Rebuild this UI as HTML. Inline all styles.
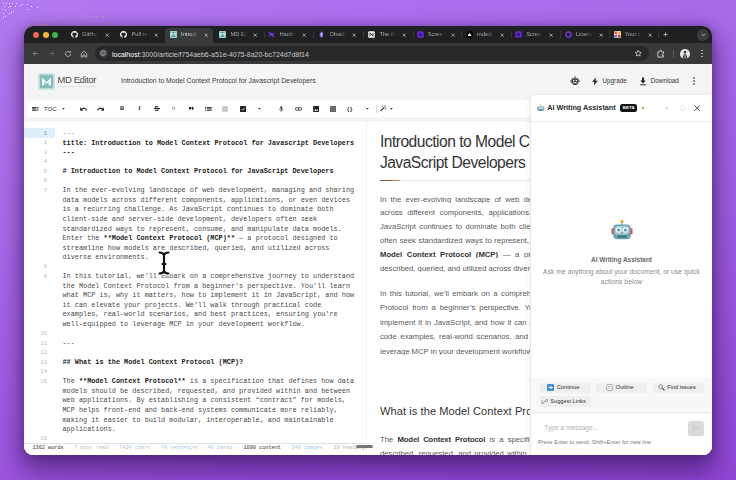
<!DOCTYPE html>
<html lang="en"><head><meta charset="utf-8"><title>MD Editor</title>
<style>
*{box-sizing:border-box;margin:0;padding:0}
html,body{width:736px;height:480px;overflow:hidden}
body{position:relative;font-family:"Liberation Sans",sans-serif;background:linear-gradient(100deg,rgba(255,255,255,.07) 0%,rgba(255,255,255,0) 45%,rgba(40,0,90,.06) 100%),linear-gradient(180deg,#ae70ef 0%,#a562e9 45%,#964adc 100%);}
.abs{position:absolute}
.t{position:absolute;white-space:nowrap;line-height:1}
#shadow{position:absolute;left:24px;top:25.5px;width:688px;height:429.5px;border-radius:9px;box-shadow:0 13px 24px 3px rgba(30,8,60,.5),0 0 10px rgba(50,20,90,.35)}
#win{position:absolute;left:24px;top:25.5px;width:688px;height:429.5px;border-radius:9px;overflow:hidden;background:#fff}
#tabs{position:absolute;left:0;top:0;width:688px;height:18px;background:#1f2022}
#tb{position:absolute;left:0;top:17.7px;width:688px;height:21.3px;background:#38393b;z-index:3}
#app{position:absolute;left:0;top:38.5px;width:688px;height:391px;background:#f5f5f5}
.mono{font-family:"Liberation Mono",monospace}
.ln{position:absolute;left:0;width:23px;text-align:right;font-size:5.6px;color:#b9bcc0;line-height:1;font-family:"Liberation Mono",monospace}
.cl{position:absolute;left:38.5px;font-size:6.85px;color:#4a4a4a;white-space:pre;line-height:1;font-family:"Liberation Mono",monospace}
.cl b{color:#222}
.pv{position:absolute;left:356px;width:322px;font-size:7.69px;color:#5a5a5a;white-space:nowrap;line-height:1;text-align:justify;text-align-last:justify;overflow:hidden}
.pv b{color:#333}
</style></head><body>

<svg class="abs" style="left:0;top:0" width="110" height="30">
<rect x="3" y="3" width="1" height="1" fill="#e6dcf7"/>
<rect x="6" y="3" width="1" height="1" fill="#e6dcf7"/>
<rect x="9" y="3" width="1" height="1" fill="#e6dcf7"/>
<rect x="12" y="3" width="1" height="1" fill="#e6dcf7"/>
<rect x="16" y="3" width="1" height="1" fill="#e6dcf7"/>
<rect x="4" y="6" width="1" height="1" fill="#e6dcf7"/>
<rect x="8" y="7" width="1" height="1" fill="#e6dcf7"/>
<rect x="10" y="6" width="1" height="1" fill="#e6dcf7"/>
<rect x="15" y="6" width="1" height="1" fill="#e6dcf7"/>
<rect x="20" y="5" width="1" height="1" fill="#e6dcf7"/>
<rect x="22" y="4" width="1" height="1" fill="#e6dcf7"/>
<rect x="27" y="4" width="1" height="1" fill="#e6dcf7"/>
<rect x="31" y="6" width="1" height="1" fill="#e6dcf7"/>
<rect x="37" y="7" width="1" height="1" fill="#e6dcf7"/>
<rect x="28" y="9" width="1" height="1" fill="#e6dcf7"/>
<rect x="2" y="9" width="1" height="1" fill="#e6dcf7"/>
<rect x="5" y="10" width="1" height="1" fill="#e6dcf7"/>
<rect x="13" y="11" width="1" height="1" fill="#e6dcf7"/>
<rect x="11" y="12" width="1" height="1" fill="#e6dcf7"/>
<rect x="9" y="13" width="1" height="1" fill="#e6dcf7"/>
<rect x="3" y="13" width="1" height="1" fill="#e6dcf7"/>
<rect x="5" y="16" width="1" height="1" fill="#e6dcf7"/>
<rect x="3" y="17" width="1" height="1" fill="#e6dcf7"/>
<rect x="87" y="17" width="1" height="1" fill="#d9a56b"/>
<rect x="91" y="16" width="1" height="1" fill="#d9a56b"/>
<rect x="97" y="16" width="1" height="1" fill="#d9a56b"/>
<rect x="103" y="16" width="1" height="1" fill="#d9a56b"/>
<rect x="36" y="19" width="1" height="1" fill="#d9a56b"/>
<rect x="42" y="20" width="1" height="1" fill="#d9a56b"/>
<rect x="48" y="20" width="1" height="1" fill="#d9a56b"/>
<rect x="22" y="21" width="1" height="1" fill="#d9a56b"/>
<rect x="28" y="24" width="1" height="1" fill="#d9a56b"/>
<rect x="33" y="22" width="1" height="1" fill="#d9a56b"/>
<rect x="36" y="24" width="1" height="1" fill="#d9a56b"/>
<rect x="38" y="24" width="1" height="1" fill="#d9a56b"/>
<rect x="40" y="24" width="1" height="1" fill="#d9a56b"/>
<rect x="42" y="24" width="1" height="1" fill="#d9a56b"/>
<rect x="44" y="24" width="1" height="1" fill="#d9a56b"/>
<rect x="46" y="24" width="1" height="1" fill="#d9a56b"/>
</svg>
<div id="shadow"></div><div id="win">
<div id="tabs">
<div class="abs" style="left:141px;top:2.2px;width:48px;height:15.8px;background:#38393b;border-radius:4px 4px 0 0"></div>
<div class="abs" style="left:9.4px;top:6.6px;width:5.8px;height:5.8px;border-radius:50%;background:#ec6a4f"></div>
<div class="abs" style="left:18.900000000000002px;top:6.6px;width:5.8px;height:5.8px;border-radius:50%;background:#f0b537"></div>
<div class="abs" style="left:28.1px;top:6.6px;width:5.8px;height:5.8px;border-radius:50%;background:#3fb34a"></div>
<svg class="abs" style="left:46.75px;top:5.9px" width="7" height="7" viewBox="0 0 16 16"><path fill="#fff" d="M8 0C3.58 0 0 3.58 0 8c0 3.54 2.29 6.53 5.47 7.59.4.07.55-.17.55-.38 0-.19-.01-.82-.01-1.49-2.01.37-2.53-.49-2.69-.94-.09-.23-.48-.94-.82-1.13-.28-.15-.68-.52-.01-.53.63-.01 1.08.58 1.23.82.72 1.21 1.87.87 2.33.66.07-.52.28-.87.51-1.07-1.78-.2-3.64-.89-3.64-3.95 0-.87.31-1.59.82-2.15-.08-.2-.36-1.02.08-2.12 0 0 .67-.21 2.2.82.64-.18 1.32-.27 2-.27s1.36.09 2 .27c1.53-1.04 2.2-.82 2.2-.82.44 1.1.16 1.92.08 2.12.51.56.82 1.27.82 2.15 0 3.07-1.87 3.75-3.65 3.95.29.25.54.73.54 1.48 0 1.07-.01 1.93-.01 2.2 0 .21.15.46.55.38A8.01 8.01 0 0 0 16 8c0-4.42-3.58-8-8-8z"/></svg>
<div class="t" style="left:58px;top:6.5px;font-size:5.7px;color:#a9aaad;width:17px;overflow:hidden;-webkit-mask-image:linear-gradient(90deg,#000 55%,transparent 100%);mask-image:linear-gradient(90deg,#000 55%,transparent 100%)">GitHu</div>
<svg class="abs" style="left:80.8px;top:7.3px" width="4.4" height="4.4" viewBox="0 0 10 10"><path d="M1.5 1.5l7 7M8.5 1.5l-7 7" stroke="#c9cacc" stroke-width="1.7"/></svg>
<svg class="abs" style="left:96.25px;top:5.9px" width="7" height="7" viewBox="0 0 16 16"><path fill="#fff" d="M8 0C3.58 0 0 3.58 0 8c0 3.54 2.29 6.53 5.47 7.59.4.07.55-.17.55-.38 0-.19-.01-.82-.01-1.49-2.01.37-2.53-.49-2.69-.94-.09-.23-.48-.94-.82-1.13-.28-.15-.68-.52-.01-.53.63-.01 1.08.58 1.23.82.72 1.21 1.87.87 2.33.66.07-.52.28-.87.51-1.07-1.78-.2-3.64-.89-3.64-3.95 0-.87.31-1.59.82-2.15-.08-.2-.36-1.02.08-2.12 0 0 .67-.21 2.2.82.64-.18 1.32-.27 2-.27s1.36.09 2 .27c1.53-1.04 2.2-.82 2.2-.82.44 1.1.16 1.92.08 2.12.51.56.82 1.27.82 2.15 0 3.07-1.87 3.75-3.65 3.95.29.25.54.73.54 1.48 0 1.07-.01 1.93-.01 2.2 0 .21.15.46.55.38A8.01 8.01 0 0 0 16 8c0-4.42-3.58-8-8-8z"/></svg>
<div class="t" style="left:107.5px;top:6.5px;font-size:5.7px;color:#a9aaad;width:17px;overflow:hidden;-webkit-mask-image:linear-gradient(90deg,#000 55%,transparent 100%);mask-image:linear-gradient(90deg,#000 55%,transparent 100%)">Pull re</div>
<svg class="abs" style="left:130.4px;top:7.3px" width="4.4" height="4.4" viewBox="0 0 10 10"><path d="M1.5 1.5l7 7M8.5 1.5l-7 7" stroke="#c9cacc" stroke-width="1.7"/></svg>
<svg class="abs" style="left:145.75px;top:5.9px" width="7" height="7" viewBox="0 0 14 14"><rect width="14" height="14" rx="2" fill="#bfe3df"/><rect x="1.5" y="1.5" width="11" height="11" rx="1" fill="#4f9a94"/><path d="M3.5 10.5V3.5L7 7l3.5-3.5v7" fill="none" stroke="#fff" stroke-width="1.8"/></svg>
<div class="t" style="left:157.1px;top:6.5px;font-size:5.7px;color:#dcdcde;width:17px;overflow:hidden;-webkit-mask-image:linear-gradient(90deg,#000 55%,transparent 100%);mask-image:linear-gradient(90deg,#000 55%,transparent 100%)">Introdu</div>
<svg class="abs" style="left:179.9px;top:7.3px" width="4.4" height="4.4" viewBox="0 0 10 10"><path d="M1.5 1.5l7 7M8.5 1.5l-7 7" stroke="#c9cacc" stroke-width="1.7"/></svg>
<svg class="abs" style="left:195.25px;top:5.9px" width="7" height="7" viewBox="0 0 14 14"><rect width="14" height="14" rx="2" fill="#bfe3df"/><rect x="1.5" y="1.5" width="11" height="11" rx="1" fill="#4f9a94"/><path d="M3.5 10.5V3.5L7 7l3.5-3.5v7" fill="none" stroke="#fff" stroke-width="1.8"/></svg>
<div class="t" style="left:206.6px;top:6.5px;font-size:5.7px;color:#a9aaad;width:17px;overflow:hidden;-webkit-mask-image:linear-gradient(90deg,#000 55%,transparent 100%);mask-image:linear-gradient(90deg,#000 55%,transparent 100%)">MD Edi</div>
<svg class="abs" style="left:229.4px;top:7.3px" width="4.4" height="4.4" viewBox="0 0 10 10"><path d="M1.5 1.5l7 7M8.5 1.5l-7 7" stroke="#c9cacc" stroke-width="1.7"/></svg>
<div class="abs" style="left:240.1px;top:5.8px;width:0.6px;height:7px;background:#37383b"></div>
<svg class="abs" style="left:244.10000000000002px;top:5.9px" width="7" height="7" viewBox="0 0 14 14"><path d="M2 3l4 2 2 4 4 2M3 9l3-4M8 9l3-4" stroke="#7c3aed" stroke-width="2.4" fill="none" stroke-linecap="round"/></svg>
<div class="t" style="left:255.4px;top:6.5px;font-size:5.7px;color:#a9aaad;width:17px;overflow:hidden;-webkit-mask-image:linear-gradient(90deg,#000 55%,transparent 100%);mask-image:linear-gradient(90deg,#000 55%,transparent 100%)">Hackh</div>
<svg class="abs" style="left:278.2px;top:7.3px" width="4.4" height="4.4" viewBox="0 0 10 10"><path d="M1.5 1.5l7 7M8.5 1.5l-7 7" stroke="#c9cacc" stroke-width="1.7"/></svg>
<div class="abs" style="left:288.9px;top:5.8px;width:0.6px;height:7px;background:#37383b"></div>
<svg class="abs" style="left:294.3px;top:5.9px" width="7" height="7" viewBox="0 0 14 14"><path d="M7 0.5l3.5 4.5-1 6.5L7 13.5 4 11 3 6z" fill="#8b6cef"/><path d="M7 2l1.8 4-1 5L6 9z" fill="#c9b8ff"/></svg>
<div class="t" style="left:305.6px;top:6.5px;font-size:5.7px;color:#a9aaad;width:17px;overflow:hidden;-webkit-mask-image:linear-gradient(90deg,#000 55%,transparent 100%);mask-image:linear-gradient(90deg,#000 55%,transparent 100%)">Obsidi</div>
<svg class="abs" style="left:328.4px;top:7.3px" width="4.4" height="4.4" viewBox="0 0 10 10"><path d="M1.5 1.5l7 7M8.5 1.5l-7 7" stroke="#c9cacc" stroke-width="1.7"/></svg>
<div class="abs" style="left:339.1px;top:5.8px;width:0.6px;height:7px;background:#37383b"></div>
<svg class="abs" style="left:344.1px;top:5.9px" width="7" height="7" viewBox="0 0 14 14"><rect x="0.5" y="0.5" width="13" height="13" rx="2" fill="#fff"/><path d="M4 10.5V3.5l6 7v-7" fill="none" stroke="#222" stroke-width="1.8"/></svg>
<div class="t" style="left:355.4px;top:6.5px;font-size:5.7px;color:#a9aaad;width:17px;overflow:hidden;-webkit-mask-image:linear-gradient(90deg,#000 55%,transparent 100%);mask-image:linear-gradient(90deg,#000 55%,transparent 100%)">The AI</div>
<svg class="abs" style="left:378.2px;top:7.3px" width="4.4" height="4.4" viewBox="0 0 10 10"><path d="M1.5 1.5l7 7M8.5 1.5l-7 7" stroke="#c9cacc" stroke-width="1.7"/></svg>
<div class="abs" style="left:388.9px;top:5.8px;width:0.6px;height:7px;background:#37383b"></div>
<svg class="abs" style="left:392.5px;top:5.9px" width="7" height="7" viewBox="0 0 14 14"><rect x="0.5" y="0.5" width="13" height="13" rx="3" fill="#6d28d9"/><rect x="3.5" y="3.5" width="7" height="7" rx="2" fill="#3b1580"/></svg>
<div class="t" style="left:403.8px;top:6.5px;font-size:5.7px;color:#a9aaad;width:17px;overflow:hidden;-webkit-mask-image:linear-gradient(90deg,#000 55%,transparent 100%);mask-image:linear-gradient(90deg,#000 55%,transparent 100%)">Scree</div>
<svg class="abs" style="left:426.6px;top:7.3px" width="4.4" height="4.4" viewBox="0 0 10 10"><path d="M1.5 1.5l7 7M8.5 1.5l-7 7" stroke="#c9cacc" stroke-width="1.7"/></svg>
<div class="abs" style="left:437.3px;top:5.8px;width:0.6px;height:7px;background:#37383b"></div>
<svg class="abs" style="left:441.75px;top:5.9px" width="7" height="7" viewBox="0 0 14 14"><circle cx="7" cy="7" r="7" fill="#000"/><path d="M7 3.5l4 6.5H3z" fill="#fff"/></svg>
<div class="t" style="left:453.1px;top:6.5px;font-size:5.7px;color:#a9aaad;width:17px;overflow:hidden;-webkit-mask-image:linear-gradient(90deg,#000 55%,transparent 100%);mask-image:linear-gradient(90deg,#000 55%,transparent 100%)">mdedi</div>
<svg class="abs" style="left:475.9px;top:7.3px" width="4.4" height="4.4" viewBox="0 0 10 10"><path d="M1.5 1.5l7 7M8.5 1.5l-7 7" stroke="#c9cacc" stroke-width="1.7"/></svg>
<div class="abs" style="left:486.6px;top:5.8px;width:0.6px;height:7px;background:#37383b"></div>
<svg class="abs" style="left:491px;top:5.9px" width="7" height="7" viewBox="0 0 14 14"><rect x="0.5" y="0.5" width="13" height="13" rx="3" fill="#6d28d9"/><rect x="3.5" y="3.5" width="7" height="7" rx="2" fill="#3b1580"/></svg>
<div class="t" style="left:502.3px;top:6.5px;font-size:5.7px;color:#a9aaad;width:17px;overflow:hidden;-webkit-mask-image:linear-gradient(90deg,#000 55%,transparent 100%);mask-image:linear-gradient(90deg,#000 55%,transparent 100%)">Scree</div>
<svg class="abs" style="left:525.1px;top:7.3px" width="4.4" height="4.4" viewBox="0 0 10 10"><path d="M1.5 1.5l7 7M8.5 1.5l-7 7" stroke="#c9cacc" stroke-width="1.7"/></svg>
<div class="abs" style="left:535.8px;top:5.8px;width:0.6px;height:7px;background:#37383b"></div>
<svg class="abs" style="left:540.6px;top:5.9px" width="7" height="7" viewBox="0 0 14 14"><circle cx="7" cy="7" r="5.2" fill="none" stroke="#7c3aed" stroke-width="2.6"/></svg>
<div class="t" style="left:551.9px;top:6.5px;font-size:5.7px;color:#a9aaad;width:17px;overflow:hidden;-webkit-mask-image:linear-gradient(90deg,#000 55%,transparent 100%);mask-image:linear-gradient(90deg,#000 55%,transparent 100%)">Licens</div>
<svg class="abs" style="left:574.7px;top:7.3px" width="4.4" height="4.4" viewBox="0 0 10 10"><path d="M1.5 1.5l7 7M8.5 1.5l-7 7" stroke="#c9cacc" stroke-width="1.7"/></svg>
<div class="abs" style="left:585.4px;top:5.8px;width:0.6px;height:7px;background:#37383b"></div>
<svg class="abs" style="left:589.5px;top:5.9px" width="7" height="7" viewBox="0 0 14 14"><rect width="14" height="14" rx="1.5" fill="#f3d9c2"/><rect x="1" y="1" width="5" height="5" fill="#e2574c"/><rect x="8" y="1" width="5" height="5" fill="#f0a63a"/><rect x="1" y="8" width="5" height="5" fill="#4b6bd6"/><rect x="8" y="8" width="5" height="5" fill="#c2432e"/></svg>
<div class="t" style="left:600.8px;top:6.5px;font-size:5.7px;color:#a9aaad;width:17px;overflow:hidden;-webkit-mask-image:linear-gradient(90deg,#000 55%,transparent 100%);mask-image:linear-gradient(90deg,#000 55%,transparent 100%)">Your c</div>
<svg class="abs" style="left:623.6px;top:7.3px" width="4.4" height="4.4" viewBox="0 0 10 10"><path d="M1.5 1.5l7 7M8.5 1.5l-7 7" stroke="#c9cacc" stroke-width="1.7"/></svg>
<div class="abs" style="left:634.3px;top:5.8px;width:0.6px;height:7px;background:#37383b"></div>
<svg class="abs" style="left:638.5px;top:6.6px" width="5" height="5" viewBox="0 0 10 10"><path d="M5 1v8M1 5h8" stroke="#c9cacc" stroke-width="1.5"/></svg>
<div class="abs" style="left:673px;top:3px;width:12px;height:12px;border-radius:50%;background:#3a3b3e"></div>
<svg class="abs" style="left:676.5px;top:7px" width="5" height="4" viewBox="0 0 10 8"><path d="M1.5 2l3.5 3.5L8.5 2" stroke="#d0d1d3" stroke-width="1.6" fill="none"/></svg>
</div>
<div id="tb">
<svg class="abs" style="left:7.5px;top:7px" width="7" height="7" viewBox="0 0 14 14"><path d="M12 7H2.5M6.5 2.5L2 7l4.5 4.5" stroke="#8f9094" stroke-width="1.7" fill="none"/></svg>
<svg class="abs" style="left:23.5px;top:7px" width="7" height="7" viewBox="0 0 14 14"><path d="M2 7h9.5M7.5 2.5L12 7l-4.5 4.5" stroke="#6a6b6f" stroke-width="1.7" fill="none"/></svg>
<svg class="abs" style="left:39.5px;top:6.5px" width="8" height="8" viewBox="0 0 16 16"><path d="M13 8a5 5 0 1 1-1.6-3.7" stroke="#c4c5c8" stroke-width="1.8" fill="none"/><path d="M13.5 1.5v4h-4z" fill="#c4c5c8"/></svg>
<svg class="abs" style="left:55.5px;top:6.5px" width="8" height="8" viewBox="0 0 16 16"><path d="M2.5 7.5L8 2.5l5.5 5V14h-3.7v-4H6.2v4H2.5z" stroke="#c4c5c8" stroke-width="1.7" fill="none"/></svg>
<div class="abs" style="left:71px;top:3px;width:554px;height:15px;border-radius:8px;background:#27282a"></div>
<div class="abs" style="left:74.5px;top:5.7px;width:9.2px;height:9.2px;border-radius:50%;background:#3d3e41"></div>
<svg class="abs" style="left:76px;top:7.2px" width="6.2" height="6.2" viewBox="0 0 12 12"><circle cx="6" cy="6" r="4.6" stroke="#d6d7d9" stroke-width="1.3" fill="none"/><path d="M6 5.2v3.2" stroke="#d6d7d9" stroke-width="1.3"/><circle cx="6" cy="3.6" r=".8" fill="#d6d7d9"/></svg>
<div class="t" style="left:88px;top:7.8px;font-size:6.99px;color:#e8e8ea"><span style="color:#fff">localhost</span><span style="color:#c7c8cb">:3000/article/f754aeb6-a51e-4075-8a20-bc724d7d8f14</span></div>
<svg class="abs" style="left:610px;top:6px" width="8.5" height="8.5" viewBox="0 0 24 24"><path d="M12 3.5l2.6 5.6 6 .7-4.5 4.1 1.2 6L12 17l-5.3 2.9 1.2-6L3.4 9.8l6-.7z" stroke="#d6d7d9" stroke-width="2.2" fill="none" stroke-linejoin="round"/></svg>
<svg class="abs" style="left:632px;top:5.5px" width="9.5" height="9.5" viewBox="0 0 20 20"><path d="M4 6h4V4.5a2 2 0 0 1 4 0V6h4v4h-1.2a2 2 0 0 0 0 4H16v3H4z" stroke="#d6d7d9" stroke-width="1.9" fill="none" stroke-linejoin="round"/></svg>
<div class="abs" style="left:648.5px;top:6.5px;width:0.7px;height:8px;background:#5b5c60"></div>
<div class="abs" style="left:656px;top:5.5px;width:10px;height:10px;border-radius:50%;background:#e9e9ea;overflow:hidden"><svg style="display:block" width="10" height="10" viewBox="0 0 20 20"><circle cx="10" cy="6.5" r="2.6" fill="#2c2c2c"/><path d="M5.5 20c0-6 1.8-10 4.5-10s4.5 4 4.5 10z" fill="#2c2c2c"/><path d="M9.3 11h1.4l.5 7h-2.4z" fill="#ddd"/></svg></div>
<div class="abs" style="left:677px;top:6.8px;width:1.5px;height:1.5px;border-radius:50%;background:#c4c5c8"></div>
<div class="abs" style="left:677px;top:9.8px;width:1.5px;height:1.5px;border-radius:50%;background:#c4c5c8"></div>
<div class="abs" style="left:677px;top:12.8px;width:1.5px;height:1.5px;border-radius:50%;background:#c4c5c8"></div>
</div>
<div id="app">
<svg class="abs" style="left:14px;top:9px" width="17" height="17" viewBox="0 0 34 34"><rect width="34" height="34" rx="3" fill="#cfe6e5"/><rect x="3.5" y="3.5" width="27" height="27" rx="2" fill="#86bcb9"/><path d="M8 26V9l9 9 9-9v17l-5-3v-5l-4 4-4-4v5z" fill="#eef8f7"/></svg>
<div class="t" style="left:33.5px;top:11.3px;font-size:9.4px;color:#4a4a4a;letter-spacing:-0.34px">MD Editor</div>
<div class="t" style="left:34px;top:20.6px;font-size:4px;color:#b5b8bc;transform:scale(.5);transform-origin:0 0;letter-spacing:0.25px">a modern markdown editor &amp; previewer</div>
<div class="t" style="left:97px;top:14.2px;font-size:6.82px;color:#3a3a3a">Introduction to Model Context Protocol for Javascript Developers</div>
<svg class="abs" style="left:546px;top:12px" width="10" height="10" viewBox="0 0 20 20"><path d="M10 1.5v3" stroke="#444" stroke-width="1.6"/><circle cx="10" cy="1.8" r="1.3" fill="#444"/><rect x="3" y="4.5" width="14" height="11" rx="2.5" fill="#444"/><circle cx="7.2" cy="9" r="1.5" fill="#fff"/><circle cx="12.8" cy="9" r="1.5" fill="#fff"/><rect x="6.5" y="12" width="7" height="1.6" fill="#fff"/><rect x="1" y="8" width="2" height="4.5" rx=".8" fill="#444"/><rect x="17" y="8" width="2" height="4.5" rx=".8" fill="#444"/><rect x="6" y="15.5" width="8" height="2.5" fill="#444"/></svg>
<svg class="abs" style="left:567px;top:12.5px" width="8" height="9" viewBox="0 0 16 18"><path d="M9.5 0.5L2.5 10h4.5l-1.5 7.5L13.5 7.5H9z" fill="#222"/></svg>
<div class="t" style="left:578.5px;top:14.4px;font-size:6.3px;color:#333">Upgrade</div>
<svg class="abs" style="left:614.5px;top:12.5px" width="8" height="9" viewBox="0 0 16 18"><path d="M6 1h4v6h3.5L8 13 2.5 7H6z" fill="#222"/><rect x="2.5" y="14.5" width="11" height="2" fill="#222"/></svg>
<div class="t" style="left:626.8px;top:14.4px;font-size:6.3px;color:#333">Download</div>
<div class="abs" style="left:669.2px;top:13px;width:1.5px;height:1.5px;border-radius:50%;background:#7a7a7a"></div>
<div class="abs" style="left:669.2px;top:16px;width:1.5px;height:1.5px;border-radius:50%;background:#7a7a7a"></div>
<div class="abs" style="left:669.2px;top:19px;width:1.5px;height:1.5px;border-radius:50%;background:#7a7a7a"></div>
<div class="abs" style="left:2.5px;top:35.5px;width:690px;height:17.5px;background:#fff;border-radius:3px 0 0 3px"></div>
<div class="abs" style="left:0;top:57.5px;width:688px;height:340px;background:#fff"></div>
<svg class="abs" style="left:8.399999999999999px;top:42.9px" width="6.4" height="3.8" viewBox="0 0 6.4 3.8"><path d="M0 .5h4.6M5.3 .5h1.1M0 1.9h4.6M5.3 1.9h1.1M0 3.3h4.6M5.3 3.3h1.1" stroke="#2c2c2c" stroke-width=".95"/></svg>
<div class="t" style="left:19.799999999999997px;top:41.75px;font-size:6.1px;color:#2c2c2c;letter-spacing:0.05px">TOC</div>
<svg class="abs" style="left:38.3px;top:43.9px" width="2.8" height="1.8" viewBox="0 0 8 5"><path d="M0 0h8L4 5z" fill="#444"/></svg>
<svg class="abs" style="left:55.8px;top:42.9px" width="7.2" height="4.2" viewBox="1.5 6.5 21.5 10.5"><path d="M12.5 8c-2.65 0-5.05.99-6.9 2.6L2 7v9h9l-3.62-3.62c1.39-1.16 3.16-1.88 5.12-1.88 3.54 0 6.55 2.31 7.6 5.5l2.37-.78C21.08 11.03 17.15 8 12.5 8z" fill="#262626" stroke="#262626" stroke-width=".8"/></svg>
<svg class="abs" style="left:73.2px;top:42.9px" width="7.2" height="4.2" viewBox="1 6.5 21.5 10.5"><path d="M18.4 10.6C16.55 8.99 14.15 8 11.5 8c-4.65 0-8.58 3.03-9.96 7.22L3.9 16c1.05-3.19 4.05-5.5 7.6-5.5 1.95 0 3.73.72 5.12 1.88L13 16h9V7l-3.6 3.6z" fill="#262626" stroke="#262626" stroke-width=".8"/></svg>
<div class="t" style="left:96px;top:42.099999999999994px;font-size:5.8px;font-weight:bold;color:#222">B</div>
<div class="t" style="left:114.30000000000001px;top:42.099999999999994px;font-size:5.8px;font-weight:bold;font-style:italic;color:#222;font-family:'Liberation Serif',serif">I</div>
<div class="t" style="left:130.6px;top:41.9px;font-size:6.3px;font-weight:bold;color:#222">S</div>
<div class="abs" style="left:129.5px;top:44.449999999999996px;width:6px;height:0.8px;background:#222"></div>
<svg class="abs" style="left:147.6px;top:43.3px" width="3.8" height="2.9" viewBox="5 7 16 10"><path d="M6 17h3l2-4V7H5v6h3zm8 0h3l2-4V7h-6v6h3z" fill="#9a9a9a"/></svg>
<svg class="abs" style="left:164.7px;top:43.099999999999994px" width="5.1" height="3.4" viewBox="5 7 16 10"><path d="M6 17h3l2-4V7H5v6h3zm8 0h3l2-4V7h-6v6h3z" fill="#222"/></svg>
<svg class="abs" style="left:181.1px;top:42.9px" width="6.6" height="3.8" viewBox="0 0 6.6 3.8"><path d="M0 .5h1.1M1.9 .5h4.7M0 1.9h1.1M1.9 1.9h4.7M0 3.3h1.1M1.9 3.3h4.7" stroke="#2c2c2c" stroke-width=".95"/></svg>
<svg class="abs" style="left:198.3px;top:41.699999999999996px" width="6.2" height="6.2" viewBox="0 0 14 14"><rect width="14" height="14" rx="1" fill="#d2d2d2"/><path d="M2.5 4h9M2.5 7h9M2.5 10h9" stroke="#b4b4b4" stroke-width="1.4"/></svg>
<svg class="abs" style="left:215.8px;top:41.699999999999996px" width="6.2" height="6.2" viewBox="0 0 14 14"><rect width="14" height="14" rx="1.5" fill="#222"/><path d="M3.5 7l2.5 2.5L10.5 4.5" stroke="#fff" stroke-width="1.8" fill="none"/></svg>
<svg class="abs" style="left:234.2px;top:43.9px" width="2.8" height="1.8" viewBox="0 0 8 5"><path d="M0 0h8L4 5z" fill="#444"/></svg>
<svg class="abs" style="left:255.10000000000002px;top:41.8px" width="4.6" height="5.9" viewBox="0 0 12 16"><rect x="3.5" y="0.5" width="5" height="9" rx="2.5" fill="#333"/><path d="M1.2 7.5a4.8 4.8 0 0 0 9.6 0M6 12v3.5" stroke="#333" stroke-width="1.7" fill="none"/></svg>
<svg class="abs" style="left:270.8px;top:42.9px" width="7.2" height="3.8" viewBox="0 0 16 8.4"><rect x="1" y="1" width="8" height="6.4" rx="3.2" fill="none" stroke="#333" stroke-width="1.8"/><rect x="7" y="1" width="8" height="6.4" rx="3.2" fill="none" stroke="#333" stroke-width="1.8"/></svg>
<svg class="abs" style="left:288.6px;top:41.699999999999996px" width="6.5" height="6.2" viewBox="0 0 14 14"><rect width="14" height="14" rx="1.5" fill="#222"/><path d="M2 11l3.5-4 2.5 2.5 2-2 2 3.5z" fill="#fff"/></svg>
<svg class="abs" style="left:305.7px;top:41.599999999999994px" width="6.5" height="6.5" viewBox="0 0 14 14"><rect width="14" height="14" rx="1" fill="#5e5e5e"/><path d="M0 4.7h14M0 9.3h14M4.7 0v14M9.3 0v14" stroke="#8a8a8a" stroke-width="1"/></svg>
<div class="t" style="left:323px;top:41.699999999999996px;font-size:6px;font-weight:bold;color:#333;letter-spacing:0.7px">{}</div>
<svg class="abs" style="left:341.9px;top:43.9px" width="2.8" height="1.8" viewBox="0 0 8 5"><path d="M0 0h8L4 5z" fill="#444"/></svg>
<div class="abs" style="left:352px;top:40.8px;width:0.6px;height:8px;background:#dcdcdc"></div>
<svg class="abs" style="left:356.4px;top:41.4px" width="7.2" height="6.6" viewBox="0 0 16 15"><path d="M2 13L9.5 5.5" stroke="#2c2c2c" stroke-width="2.6" stroke-linecap="round"/><path d="M12 1v3M10.5 2.5h3M5 1.5v2.4M3.8 2.7h2.4M13 7.5v2.6M11.7 8.8h2.6" stroke="#2c2c2c" stroke-width="1.2"/></svg>
<svg class="abs" style="left:366.1px;top:43.9px" width="2.8" height="1.8" viewBox="0 0 8 5"><path d="M0 0h8L4 5z" fill="#444"/></svg>
<div class="abs" style="left:0;top:63.5px;width:31px;height:10px;background:#dfeefb"></div>
<div class="ln" style="top:66.7px;color:#8a8f96">1</div>
<div class="cl" style="top:66px"><span style='color:#999'>---</span></div>
<div class="ln" style="top:76.25px;color:#b9bcc0">2</div>
<div class="cl" style="top:75.55px"><b>title: Introduction to Model Context Protocol for Javascript Developers</b></div>
<div class="ln" style="top:85.8px;color:#b9bcc0">3</div>
<div class="cl" style="top:85.1px"><b>---</b></div>
<div class="ln" style="top:95.35px;color:#b9bcc0">4</div>
<div class="ln" style="top:104.9px;color:#b9bcc0">5</div>
<div class="cl" style="top:104.2px"><b># Introduction to Model Context Protocol for JavaScript Developers</b></div>
<div class="ln" style="top:114.45px;color:#b9bcc0">6</div>
<div class="ln" style="top:124px;color:#b9bcc0">7</div>
<div class="cl" style="top:123.3px">In the ever-evolving landscape of web development, managing and sharing</div>
<div class="cl" style="top:132.85px">data models across different components, applications, or even devices</div>
<div class="cl" style="top:142.4px">is a recurring challenge. As JavaScript continues to dominate both</div>
<div class="cl" style="top:151.95px">client-side and server-side development, developers often seek</div>
<div class="cl" style="top:161.5px">standardized ways to represent, consume, and manipulate data models.</div>
<div class="cl" style="top:171.05px">Enter the <b>**Model Context Protocol (MCP)**</b> &#8212; a protocol designed to</div>
<div class="cl" style="top:180.6px">streamline how models are described, queried, and utilized across</div>
<div class="cl" style="top:190.15px">diverse environments.</div>
<div class="ln" style="top:200.4px;color:#b9bcc0">8</div>
<div class="ln" style="top:209.95px;color:#b9bcc0">9</div>
<div class="cl" style="top:209.25px">In this tutorial, we'll embark on a comprehensive journey to understand</div>
<div class="cl" style="top:218.8px">the Model Context Protocol from a beginner's perspective. You'll learn</div>
<div class="cl" style="top:228.35px">what MCP is, why it matters, how to implement it in JavaScript, and how</div>
<div class="cl" style="top:237.9px">it can elevate your projects. We'll walk through practical code</div>
<div class="cl" style="top:247.45px">examples, real-world scenarios, and best practices, ensuring you're</div>
<div class="cl" style="top:257px">well-equipped to leverage MCP in your development workflow.</div>
<div class="ln" style="top:267.25px;color:#b9bcc0">10</div>
<div class="ln" style="top:276.8px;color:#b9bcc0">11</div>
<div class="cl" style="top:276.1px">---</div>
<div class="ln" style="top:286.35px;color:#b9bcc0">12</div>
<div class="ln" style="top:295.9px;color:#b9bcc0">13</div>
<div class="cl" style="top:295.2px"><b>## What is the Model Context Protocol (MCP)?</b></div>
<div class="ln" style="top:305.45px;color:#b9bcc0">14</div>
<div class="ln" style="top:315px;color:#b9bcc0">15</div>
<div class="cl" style="top:314.3px">The <b>**Model Context Protocol**</b> is a specification that defines how data</div>
<div class="cl" style="top:323.85px">models should be described, requested, and provided within and between</div>
<div class="cl" style="top:333.4px">web applications. By establishing a consistent &#8220;contract&#8221; for models,</div>
<div class="cl" style="top:342.95px">MCP helps front-end and back-end systems communicate more reliably,</div>
<div class="cl" style="top:352.5px">making it easier to build modular, interoperable, and maintainable</div>
<div class="cl" style="top:362.05px">applications.</div>
<div class="ln" style="top:372.3px;color:#b9bcc0">16</div>
<div class="abs" style="left:0;top:379px;width:346px;height:0.7px;background:#e2e2e2"></div>
<div class="t mono" style="left:8.5px;top:382.15px;font-size:5.2px;color:#333">1362 words</div>
<div class="t mono" style="left:50px;top:382.15px;font-size:5.2px;color:#c9c4b4">7 mins read</div>
<div class="t mono" style="left:95px;top:382.15px;font-size:5.2px;color:#a9c8e6">7424 chars</div>
<div class="t mono" style="left:137px;top:382.15px;font-size:5.2px;color:#a9c8e6">78 sentences</div>
<div class="t mono" style="left:183.5px;top:382.15px;font-size:5.2px;color:#a9c8e6">40 paras</div>
<div class="t mono" style="left:219.5px;top:382.15px;font-size:5.2px;color:#333">1090 content</div>
<div class="t mono" style="left:267.5px;top:382.15px;font-size:5.2px;color:#a9c8e6">340 images</div>
<div class="t mono" style="left:309.5px;top:382.15px;font-size:5.2px;color:#b9b9b9">19 headings</div>
<div class="abs" style="left:342.5px;top:56px;width:0.6px;height:334px;background:#e9e9e9"></div>
<div class="abs" style="left:342.5px;top:57.5px;width:346px;height:333px;background:#fff;overflow:hidden"></div>
<div class="t" style="left:355.9px;top:70.4px;font-size:15.6px;color:#333;letter-spacing:-0.5px;width:150.5px;overflow:hidden">Introduction to Model Context Protocol for</div>
<div class="t" style="left:355.9px;top:91.4px;font-size:15.6px;color:#333;letter-spacing:-0.5px;width:150.5px;overflow:hidden">JavaScript Developers</div>
<div class="abs" style="left:356px;top:116.2px;width:322px;height:0.7px;background:#e4e4e4"></div>
<div class="abs" style="left:356px;top:116px;width:20px;height:1px;background:linear-gradient(90deg,#5a4a3a,#d98b4a)"></div>
<div class="pv" style="top:131.6px">In the ever-evolving landscape of web development, managing and sharing data models</div>
<div class="pv" style="top:145.3px">across different components, applications, or even devices is a recurring challenge. As</div>
<div class="pv" style="top:159px">JavaScript continues to dominate both client-side and server-side development, developers</div>
<div class="pv" style="top:172.9px">often seek standardized ways to represent, consume, and manipulate data models. Enter the</div>
<div class="pv" style="top:186.8px"><b>Model Context Protocol (MCP)</b> &#8212; a protocol designed to streamline how models are</div>
<div class="pv" style="top:200.7px;text-align-last:left">described, queried, and utilized across diverse environments.</div>
<div class="pv" style="top:226.1px">In this tutorial, we&#8217;ll embark on a comprehensive journey to understand the Model Context</div>
<div class="pv" style="top:240.4px">Protocol from a beginner&#8217;s perspective. You&#8217;ll learn what MCP is, why it matters, how to</div>
<div class="pv" style="top:254.9px">implement it in JavaScript, and how it can elevate your projects. We&#8217;ll walk through practical</div>
<div class="pv" style="top:269.3px">code examples, real-world scenarios, and best practices, ensuring you&#8217;re well-equipped to</div>
<div class="pv" style="top:283.7px;text-align-last:left">leverage MCP in your development workflow.</div>
<div class="t" style="left:355.9px;top:341.5px;font-size:11.1px;color:#333;letter-spacing:0.07px;width:150.5px;overflow:hidden">What is the Model Context Protocol (MCP)?</div>
<div class="pv" style="top:372.2px">The <b style="letter-spacing:-0.12px">Model Context Protocol</b> is a specification that defines how data models should be</div>
<div class="pv" style="top:385.9px">described, requested, and provided within and between web applications. By establishing a</div>
<div class="abs" style="left:342.2px;top:57.5px;width:0.6px;height:334px;background:#f0f0f0"></div>
<div class="abs" style="left:332.3px;top:380.9px;width:17.2px;height:2.9px;border-radius:1.5px;background:#757575"></div>
<div class="abs" style="left:506.5px;top:30.6px;width:182px;height:361.4px;background:#fff;border-top-left-radius:5px;box-shadow:-2px 0 5px rgba(0,0,0,.06)"></div>
<div class="abs" style="left:506.5px;top:56.5px;width:182px;height:0.7px;background:#ececec"></div>
<svg class="abs" style="left:513.2px;top:40.2px" width="7.6" height="7.6" viewBox="0 0 24 24"><circle cx="12" cy="2.6" r="1.9" fill="#f2b233"/><rect x="11.3" y="3.5" width="1.4" height="3" fill="#9aa3a8"/><rect x="0.5" y="10" width="3" height="7" rx="1.2" fill="#d9534f"/><rect x="20.5" y="10" width="3" height="7" rx="1.2" fill="#d9534f"/><rect x="2.5" y="6" width="19" height="16" rx="4" fill="#6fa3b3"/><rect x="4.2" y="7.5" width="15.6" height="9.5" rx="3" fill="#a9cdd8"/><circle cx="8.3" cy="12" r="3" fill="#e9f3f6"/><circle cx="15.7" cy="12" r="3" fill="#e9f3f6"/><circle cx="8.3" cy="12" r="1.5" fill="#4e8fa5"/><circle cx="15.7" cy="12" r="1.5" fill="#4e8fa5"/><rect x="7" y="18" width="10" height="2.4" rx=".6" fill="#3f6f80"/><path d="M11 14.5h2l-1 1.8z" fill="#c0504d"/></svg>
<div class="t" style="left:523.2px;top:40.4px;font-size:7.25px;font-weight:bold;color:#2b2b2b">AI Writing Assistant</div>
<div class="abs" style="left:595.7px;top:40.2px;width:17.8px;height:8.3px;border-radius:2.5px;background:#111"></div>
<div class="t" style="left:598.7px;top:42.3px;font-size:4.3px;font-weight:bold;color:#fff;letter-spacing:0.15px">BETA</div>
<div class="abs" style="left:617.6px;top:42.6px;width:2.8px;height:2.8px;background:#76b041;border-radius:0.8px"></div>
<svg class="abs" style="left:640.2px;top:41.7px" width="5" height="5" viewBox="0 0 10 10"><path d="M5 0.5v9M0.5 5h9" stroke="#dcdcdc" stroke-width="1.4"/></svg>
<svg class="abs" style="left:655.2px;top:40.7px" width="7" height="7" viewBox="0 0 14 14"><circle cx="7" cy="7" r="5" stroke="#e0e0e0" stroke-width="1.6" fill="none"/><path d="M7 4v3.3l2 1.2" stroke="#e0e0e0" stroke-width="1.2" fill="none"/></svg>
<svg class="abs" style="left:670.2px;top:41px" width="6.4" height="6.4" viewBox="0 0 10 10"><path d="M1 1l8 8M9 1l-8 8" stroke="#444" stroke-width="1.5"/></svg>
<svg class="abs" style="left:586.5px;top:154.5px" width="22" height="22" viewBox="0 0 24 24"><circle cx="12" cy="2.6" r="1.9" fill="#f2b233"/><rect x="11.3" y="3.5" width="1.4" height="3" fill="#9aa3a8"/><rect x="0.5" y="10" width="3" height="7" rx="1.2" fill="#d9534f"/><rect x="20.5" y="10" width="3" height="7" rx="1.2" fill="#d9534f"/><rect x="2.5" y="6" width="19" height="16" rx="4" fill="#6fa3b3"/><rect x="4.2" y="7.5" width="15.6" height="9.5" rx="3" fill="#a9cdd8"/><circle cx="8.3" cy="12" r="3" fill="#e9f3f6"/><circle cx="15.7" cy="12" r="3" fill="#e9f3f6"/><circle cx="8.3" cy="12" r="1.5" fill="#4e8fa5"/><circle cx="15.7" cy="12" r="1.5" fill="#4e8fa5"/><rect x="7" y="18" width="10" height="2.4" rx=".6" fill="#3f6f80"/><path d="M11 14.5h2l-1 1.8z" fill="#c0504d"/></svg>
<div class="t" style="left:506.5px;width:182px;text-align:center;top:193.2px;font-size:6.46px;font-weight:bold;color:#6a6a6a">AI Writing Assistant</div>
<div class="t" style="left:506.5px;width:182px;text-align:center;top:204.7px;font-size:6.82px;color:#8c8c8c">Ask me anything about your document, or use quick</div>
<div class="t" style="left:506.5px;width:182px;text-align:center;top:214.9px;font-size:6.82px;color:#8c8c8c">actions below</div>
<div class="abs" style="left:507px;top:313.5px;width:181.5px;height:34px;background:#f8f8f8"></div>
<div class="abs" style="left:507px;top:348px;width:181.5px;height:0.7px;background:#e6e6e6"></div>
<div class="abs" style="left:515.5px;top:318.5px;width:51.2px;height:10.5px;border-radius:2px;background:#efefef"></div><svg class="abs" style="left:523.3px;top:320.3px" width="7" height="7" viewBox="0 0 14 14"><rect width="14" height="14" rx="2" fill="#3d8bd9"/><path d="M3 7h6M7 3.5L10.5 7 7 10.5" stroke="#fff" stroke-width="2" fill="none"/></svg><div class="t" style="left:532.8px;top:321px;font-size:5.65px;color:#2f2f2f">Continue</div>
<div class="abs" style="left:572.2px;top:318.5px;width:51.2px;height:10.5px;border-radius:2px;background:#efefef"></div><svg class="abs" style="left:582.35px;top:320.3px" width="7" height="7" viewBox="0 0 14 14"><rect x="1.5" y="1" width="11" height="12" rx="2" fill="#f4f4f4" stroke="#888" stroke-width="1.3"/><path d="M4 5h6M4 8h4" stroke="#999" stroke-width="1.2"/></svg><div class="t" style="left:591.85px;top:321px;font-size:5.65px;color:#2f2f2f">Outline</div>
<div class="abs" style="left:628.9px;top:318.5px;width:51.2px;height:10.5px;border-radius:2px;background:#efefef"></div><svg class="abs" style="left:633.7px;top:320.3px" width="7" height="7" viewBox="0 0 14 14"><circle cx="5.5" cy="5.5" r="4" fill="#cfe6f5" stroke="#777" stroke-width="1.4"/><path d="M8.5 8.5L13 13" stroke="#555" stroke-width="2.2"/></svg><div class="t" style="left:643.2px;top:321px;font-size:5.65px;color:#2f2f2f">Find issues</div>
<div class="abs" style="left:515.5px;top:332.25px;width:51.2px;height:10.5px;border-radius:2px;background:#efefef"></div><svg class="abs" style="left:516.8px;top:334.05px" width="7" height="7" viewBox="0 0 14 14"><path d="M6 8.5L3.8 10.7a2.2 2.2 0 0 1-3-3L3.5 5M8 5.5l2.2-2.2a2.2 2.2 0 0 1 3 3L10.5 9M4.5 9.5l5-5" stroke="#777" stroke-width="1.6" fill="none" transform="translate(.5 0)"/></svg><div class="t" style="left:526.3px;top:334.75px;font-size:5.65px;color:#2f2f2f">Suggest Links</div>
<div class="t" style="left:520.3px;top:361.3px;font-size:6.6px;color:#b4b4b4">Type a message...</div>
<div class="abs" style="left:664px;top:357.2px;width:16.3px;height:15px;border-radius:2.5px;background:#dadada"></div>
<svg class="abs" style="left:668.3px;top:361.3px" width="8" height="7" viewBox="0 0 16 14"><path d="M1 1l14 6L1 13l2.5-6z" fill="none" stroke="#c4c4c4" stroke-width="1.4"/><path d="M3.5 7H9" stroke="#c4c4c4" stroke-width="1.4"/></svg>
<div class="t" style="left:514px;top:376.1px;font-size:5.76px;color:#7a7a7a">Press Enter to send, Shift+Enter for new line</div>
<div class="abs" style="left:506.2px;top:36px;width:0.6px;height:356px;background:#e8e8e8"></div>
</div>
</div>
<svg class="abs" style="left:156.7px;top:250px" width="14" height="26" viewBox="0 0 14 26" fill="none" stroke-linecap="round" stroke-linejoin="round"><g stroke="#fff" stroke-width="4.4"><path d="M2.5 2.5Q6 2.5 7 5Q8 2.5 11.5 2.5M7 5V21M2.5 23.5Q6 23.5 7 21Q8 23.5 11.5 23.5M5.5 14H8.5"/></g><g stroke="#111" stroke-width="2.1"><path d="M2.5 2.5Q6 2.5 7 5Q8 2.5 11.5 2.5M7 5V21M2.5 23.5Q6 23.5 7 21Q8 23.5 11.5 23.5M5.5 14H8.5"/></g></svg>
</body></html>
